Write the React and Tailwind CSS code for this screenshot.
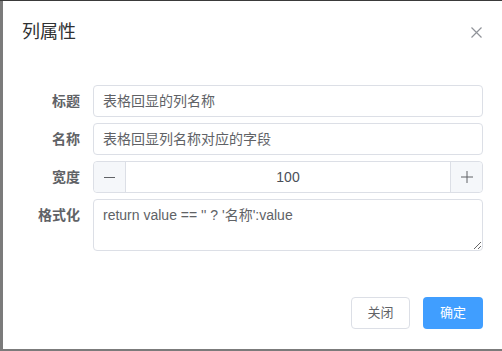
import React from "react";

const font = { fontFamily: '"Liberation Sans", "Noto Sans CJK SC", sans-serif' };

function Row({ label, children }) {
  return (
    <div className="flex items-start mb-[6px]">
      <div className="w-[90px] shrink-0 pr-[13px] text-right text-[14px] leading-[32px] font-bold text-[#606266]">
        {label}
      </div>
      <div className="flex-1">{children}</div>
    </div>
  );
}

export default function App() {
  return (
    <div
      className="w-[502px] h-[351px] bg-[#7b7b7b] border-t border-[#3a3a3a] pl-[3px] pb-[2px] flex"
      style={font}
    >
      <div className="flex-1 bg-white flex flex-col">
        <div className="flex justify-between items-start pl-[19px] pr-[20px] pt-[19px]">
          <div className="text-[18px] leading-[24px] text-[#303133]">列属性</div>
          <svg width="11" height="11" viewBox="0 0 11 11" className="mt-[7px]">
            <path d="M0.5 0.5 L10.5 10.5 M10.5 0.5 L0.5 10.5" stroke="#909399" strokeWidth="1.2" fill="none" />
          </svg>
        </div>
        <div className="mt-[41px] pr-[19px]">
          <Row label="标题">
            <div className="h-[32px] border border-[#dcdfe6] rounded-[4px] pl-[9px] text-[14px] leading-[30px] text-[#606266]">
              表格回显的列名称
            </div>
          </Row>
          <Row label="名称">
            <div className="h-[32px] border border-[#dcdfe6] rounded-[4px] pl-[9px] text-[14px] leading-[30px] text-[#606266]">
              表格回显列名称对应的字段
            </div>
          </Row>
          <Row label="宽度">
            <div className="h-[32px] border border-[#dcdfe6] rounded-[4px] flex text-[14px] text-[#606266]">
              <div className="w-[32px] bg-[#f5f7fa] border-r border-[#dcdfe6] rounded-l-[4px] flex items-center justify-center">
                <svg width="11" height="11" viewBox="0 0 11 11">
                  <path d="M0 5.5 H11" stroke="#606266" strokeWidth="1" fill="none" />
                </svg>
              </div>
              <div className="flex-1 text-center leading-[30px] text-[#4a4f58]">100</div>
              <div className="w-[32px] bg-[#f5f7fa] border-l border-[#dcdfe6] rounded-r-[4px] flex items-center justify-center">
                <svg width="12" height="12" viewBox="0 0 12 12">
                  <path d="M0 6 H12 M6 0 V12" stroke="#606266" strokeWidth="1" fill="none" />
                </svg>
              </div>
            </div>
          </Row>
          <Row label="格式化">
            <textarea
              readOnly
              value="return value == '' ? '名称':value"
              className="block w-full h-[52px] border border-[#dcdfe6] rounded-[4px] pl-[9px] pt-[5px] text-[14px] leading-[21px] text-[#606266] outline-none"
              style={font}
            />
          </Row>
        </div>
        <div className="mt-auto flex justify-end gap-[13px] pr-[19px] pb-[20px]">
          <button className="w-[59px] h-[32px] border border-[#dcdfe6] rounded-[4px] bg-white text-[13px] text-[#606266]">
            关闭
          </button>
          <button className="w-[60px] h-[32px] rounded-[4px] bg-[#409eff] text-[13px] text-white">
            确定
          </button>
        </div>
      </div>
    </div>
  );
}
